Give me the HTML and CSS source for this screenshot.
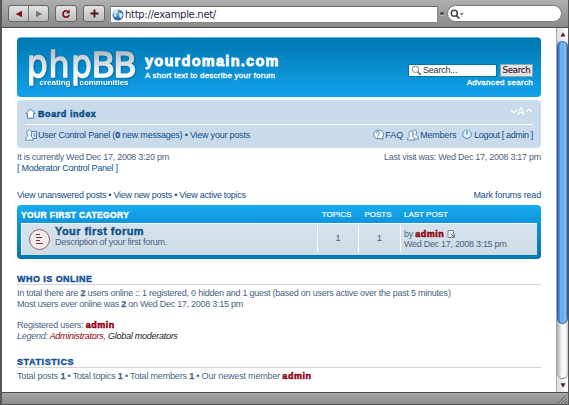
FILE: index.html
```html
<!DOCTYPE html>
<html lang="en">
<head>
<meta charset="utf-8">
<title>yourdomain.com</title>
<link rel="stylesheet" href="styles.css">
</head>
<body>
<div class="window">
  <header class="toolbar">
    <div class="btn pair">
      <span><svg width="8" height="8" viewBox="0 0 8 8"><path d="M7 0.8v6.4L0.8 4z" fill="#8a0c18"/></svg></span>
      <span><svg width="8" height="8" viewBox="0 0 8 8"><path d="M1 0.8v6.4L7.2 4z" fill="#777"/></svg></span>
    </div>
    <div class="btn reload"><svg width="10" height="10" viewBox="0 0 10 10"><path d="M7.7 3A3.2 3.2 0 1 0 8.2 6" fill="none" stroke="#7d1018" stroke-width="1.7"/><path d="M5 4.2L8.7 0.6V4.4z" fill="#7d1018"/></svg></div>
    <div class="btn add"><svg width="9" height="9" viewBox="0 0 9 9"><path d="M4.5 .5v8M.5 4.5h8" stroke="#521018" stroke-width="1.8"/></svg></div>
    <div class="address">
      <svg width="12" height="12" viewBox="0 0 12 12"><defs><radialGradient id="globe" cx=".35" cy=".3"><stop offset="0" stop-color="#a7d2ef"/><stop offset="1" stop-color="#2b6aa9"/></radialGradient></defs><circle cx="6" cy="6" r="5.5" fill="url(#globe)"/><path d="M1.5 3.5Q4 0 6.2 1.4L5.2 3.6 3 4.5 4.5 7 2.8 8.5zM7 4.5l2.8-.8 1 2.8-2.2 3L7.4 8z" fill="#d7edfa"/></svg>
      <span>http://example.net/</span>
    </div>
    <i class="grip"></i>
    <div class="finder"><svg width="15" height="11" viewBox="0 0 15 11"><circle cx="4.3" cy="4.3" r="3" fill="none" stroke="#444" stroke-width="1.5"/><path d="M6.4 6.5L9.2 9.6" stroke="#444" stroke-width="1.7"/><path d="M9.8 4.2h4l-2 2z" fill="#555"/></svg></div>
  </header>

  <div class="body">
    <main class="page">
      <div class="banner">
        <svg class="logo" width="112" height="46" viewBox="0 0 112 46">
          <defs><linearGradient id="metal" x1="0" y1="0" x2="0" y2="1"><stop offset=".2" stop-color="#b9bec3"/><stop offset=".55" stop-color="#e3e7ea"/><stop offset=".8" stop-color="#fff"/></linearGradient></defs>
          <g class="mark" fill="url(#metal)" stroke="url(#metal)">
            <text transform="translate(-.2 32.700) scale(.85 1)" font-size="39">p</text>
            <text transform="translate(21.600 32.700) scale(.93 1)" font-size="36">h</text>
            <text transform="translate(44 32.700) scale(.85 1)" font-size="39">p</text>
            <text transform="translate(64.500 32.700)" font-size="34.500">B</text>
            <text transform="translate(86.300 32.700)" font-size="34.500">B</text>
          </g>
          <g class="motto"><text x="12.500" y="41" textLength="31">creating</text><text x="52.500" y="41" textLength="49">communities</text></g>
        </svg>
        <div class="titles"><h1>yourdomain.com</h1><p>A short text to describe your forum</p></div>
        <div class="search">
          <div class="fields">
            <div class="query"><svg width="11" height="11" viewBox="0 0 11 11"><circle cx="4.5" cy="4.3" r="3.2" fill="#fff" stroke="#888"/><path d="M6.8 6.8L9.8 10" stroke="#666" stroke-width="1.6"/></svg><span>Search...</span></div>
            <div class="go"><span>Search</span></div>
          </div>
          <a class="advanced">Advanced search</a>
        </div>
      </div>

      <nav class="navbar">
        <div class="crumbs">
          <svg width="11" height="11" viewBox="0 0 11 11"><path d="M1 5.4L5.5 .9 10 5.4H8.7v4.8H2.3V5.4z" fill="#fff" stroke="#2c77b3" stroke-width=".9"/></svg>
          <b class="board">Board index</b>
          <svg class="sizer" width="23" height="10" viewBox="0 0 23 10"><path d="M.8 2L4 4.700 7.2 2M16 3.700L19 1l3 2.700" fill="none" stroke="#fff" stroke-width="1.2"/><text x="7.500" y="7">A</text></svg>
        </div>
        <div class="links">
          <svg width="12" height="12" viewBox="0 0 12 12"><path d="M6.5 2.5h5v7h-5z" fill="#e9f4fc" stroke="#347eb8" stroke-width=".9"/><path d="M8.5 5h2M8.5 7h2" stroke="#347eb8"/><path d="M.6 11.2C.6 8.5 2 7.4 2.8 7 1 4.5 2 .8 4.3.8s3.3 3.6 1.6 6.2c1 .4 2.3 1.5 2.3 4.2z" fill="#eff6fb" stroke="#4c7898" stroke-width=".8"/></svg>
          <span class="ucp">User Control Panel (<b>0</b> new messages) • View your posts</span>
          <svg class="faqi" width="12" height="12" viewBox="0 0 12 12"><path d="M8.4 9.5l2.8.9-.9-2A5 4.3 0 1 0 8.4 9.5" fill="#fff" stroke="#4c7ba5" stroke-width=".9"/><path d="M4.2 4.2c0-2 3.2-2 3.2 0 0 1.2-1.6 1.1-1.6 2.5M5.8 7.5v1" fill="none" stroke="#347eb8"/></svg>
          <span class="faq">FAQ</span>
          <svg class="memi" width="12" height="12" viewBox="0 0 12 12"><g fill="#eef6fc" stroke="#4c7ba5" stroke-width=".8"><path d="M5 8C5 6.5 5.8 6 6.4 5.7 5 3.5 6 .8 7.6.8s2.8 2.7 1.2 5c1 .4 2.6 1.3 2.6 4.2H7z"/><path d="M.6 11c0-2.6 1.2-3.5 2-3.8C1 5 2 2 3.9 2s3 3 1.5 5.2c.8.3 2.2 1.2 2.2 3.8z"/></g></svg>
          <span class="members">Members</span>
          <svg class="outi" width="10" height="11" viewBox="0 0 10 11"><path d="M3 1.4a4.3 4.3 0 1 0 4 0" fill="#dfedf8" stroke="#4c88bd"/><path d="M5 .5v5" stroke="#347eb8" stroke-width="1.1"/></svg>
          <span class="logout">Logout [ admin ]</span>
        </div>
      </nav>

      <div class="row status"><span class="now">It is currently Wed Dec 17, 2008 3:20 pm</span><span class="last">Last visit was: Wed Dec 17, 2008 3:17 pm</span></div>
      <div class="row"><span class="mod">[ <a>Moderator Control Panel</a> ]</span></div>
      <div class="row views"><span class="viewlinks">View unanswered posts • View new posts • View active topics</span><span class="mark-read">Mark forums read</span></div>

      <section class="forums">
        <div class="grid head"><b class="cat">YOUR FIRST CATEGORY</b><span class="c">TOPICS</span><span class="c">POSTS</span><span class="lp">LAST POST</span></div>
        <div class="grid forum">
          <div class="topic">
            <svg width="23" height="23" viewBox="0 0 23 23"><circle cx="11.5" cy="11.5" r="10" fill="#f1eeee" stroke="#985b60" stroke-width="1"/><path d="M8 6.500h4M8 9.500h6M8 12.500h4M8 15.500h7" stroke="#8d252c" stroke-width="1.1"/></svg>
            <div><b class="name">Your first forum</b><p class="desc">Description of your first forum.</p></div>
          </div>
          <span class="num">1</span><span class="num">1</span>
          <div class="post"><p>by <b class="admin">admin</b> <svg width="8" height="8" viewBox="0 0 8 8"><path d="M1 .5h5.5V4M4 7.5H1v-7" fill="#fff" stroke="#777" stroke-width=".9"/><path d="M4 4l3 3M7.2 4v3.300h-3" fill="none" stroke="#555" stroke-width=".9"/></svg></p><p class="date">Wed Dec 17, 2008 3:15 pm</p></div>
        </div>
      </section>

      <section class="info online">
        <h3>WHO IS ONLINE</h3>
        <p class="total">In total there are <b>2</b> users online :: 1 registered, 0 hidden and 1 guest (based on users active over the past 5 minutes)</p>
        <p class="most">Most users ever online was <b>2</b> on Wed Dec 17, 2008 3:15 pm</p>
        <p class="registered">Registered users: <b class="admin">admin</b></p>
        <p class="legend">Legend: <a class="adm">Administrators</a>, <a class="glob">Global moderators</a></p>
      </section>
      <section class="info stats">
        <h3>STATISTICS</h3>
        <p class="totals">Total posts <b>1</b> • Total topics <b>1</b> • Total members <b>1</b> • Our newest member <b class="admin">admin</b></p>
      </section>
    </main>
    <aside class="scroll">
      <div class="arrow"><svg width="6" height="5" viewBox="0 0 6 5"><path d="M.5 4.5h5L3 .3z" fill="#4a2328"/></svg></div>
      <div class="track"><div class="thumb"></div></div>
      <div class="arrow"><svg width="6" height="5" viewBox="0 0 6 5"><path d="M.5 .3h5L3 4.7z" fill="#4a2328"/></svg></div>
    </aside>
  </div>
  <footer class="statusbar"><svg width="10" height="9" viewBox="0 0 10 9"><path d="M1 8.500L9 .5M4 8.500L9.500 3.500M7 8.500L9.500 6.500" stroke="#555" stroke-width=".9"/><path d="M2 9L9.500 1.500M5 9L10 4.500" stroke="#ccc" stroke-width=".6"/></svg></footer>
</div>
</body>
</html>
```
FILE: styles.css
```css
* { box-sizing: border-box; }
body { margin: 0; font-family: "Liberation Sans", sans-serif; font-size: 9px; line-height: 11px; color: #4c5f84; overflow: hidden; }
h1, h3, p { margin: 0; }
svg { display: block; flex: none; }
b { color: inherit; -webkit-text-stroke: .25px; }
.window { width: 569px; height: 405px; display: flex; flex-direction: column; background: #fff; border: solid #555; border-width: 0 1px 1px 2px; }

.toolbar { height: 28px; flex: none; display: flex; align-items: flex-start; padding: 5px 5px 0 6px; background: linear-gradient(#afafaf, #999 60%, #8b8b8b); border-bottom: 1px solid #4d4d4d; }
.btn { height: 17px; border: 1px solid #666; border-radius: 3px; background: linear-gradient(#e4e4e4, #bdbdbd); display: flex; align-items: center; justify-content: center; }
.pair { width: 41px; }
.pair span { flex: 1; height: 15px; display: flex; align-items: center; justify-content: center; }
.pair span + span { border-left: 1px solid #777; }
.reload { width: 22px; margin-left: 6px; }
.add { width: 22px; margin-left: 6px; }
.address { width: 328px; height: 17px; margin-left: 5px; margin-top: 1px; background: #fff; border: 1px solid #888; border-top-color: #666; display: flex; align-items: center; padding-left: 1px; font: 10px/15px "DejaVu Sans", sans-serif; color: #282c44; }
.address span { margin-left: 1px; letter-spacing: -.3px; }
.grip { width: 4px; height: 4px; margin: 7px 3px 0 2px; border-radius: 2px; background: #444; border-bottom: 1px solid #ddd; }
.finder { width: 115px; height: 17px; border-radius: 9px; background: #fff; border: 1px solid #777; padding: 3px 0 0 2px; }

.body { flex: 1; min-height: 0; display: flex; }
.page { flex: 1; padding: 9px 15px 0; white-space: nowrap; }

.banner { width: 524px; height: 60px; border-radius: 4px; background: linear-gradient(#0076b1, #12a3eb); border-top: 1px solid #5bb5df; display: flex; color: #fff; }
.logo { margin: 6px 0 0 10px; overflow: visible; filter: drop-shadow(1px 1px 1px #075887aa); }
.mark { font-family: "DejaVu Sans"; stroke-width: 1.4; stroke-linejoin: round; }
.motto { font: bold 8px "Liberation Sans"; fill: #fff; }
.titles { margin: 15px 0 0 6px; width: 240px; }
h1 { font-size: 14.500px; line-height: 16px; -webkit-text-stroke: .8px; letter-spacing: 1.28px; }
.titles p { font-size: 8px; line-height: 13px; -webkit-text-stroke: .3px; letter-spacing: .24px; }
.search { margin: 26px 8px 0 auto; display: flex; flex-direction: column; }
.fields { display: flex; justify-content: space-between; width: 125px; }
.query { width: 89px; height: 13px; background: #fff; border: 1px solid #0075b0; color: #333; display: flex; align-items: center; padding-left: 2px; }
.query span { margin-left: 1px; letter-spacing: -.2px; }
.go { width: 33px; height: 13px; background: #dfe3e5; border: 1px solid #8aa; color: #481c28; text-align: center; font: 8.500px/11px "DejaVu Sans"; }
.go span { letter-spacing: -.2px; -webkit-text-stroke: .2px; }
.advanced { align-self: flex-end; font-size: 8px; line-height: 12px; -webkit-text-stroke: .3px; letter-spacing: .3px; }

.navbar { width: 524px; height: 48px; margin-top: 3px; border-radius: 4px; background: #cadceb; padding: 0 8px; color: #104f88; }
.crumbs { height: 25px; border-bottom: 1px solid #fff; display: flex; padding-top: 8px; }
.board { margin-left: 2px; -webkit-text-stroke: .5px; letter-spacing: .57px; line-height: 12px; }
.sizer { margin-left: auto; overflow: visible; }
.sizer text { font-size: 10px; fill: #fff; }
.links { display: flex; padding-top: 4px; line-height: 13px; letter-spacing: -.22px; }
.ucp { margin-left: 1px; }
.faqi { margin-left: auto; }
.faq { margin-left: 1px; letter-spacing: 0; }
.memi { margin-left: 4px; }
.outi { margin-left: 6px; }
.members { margin-left: 1px; }
.logout { margin-left: 2px; letter-spacing: -.36px; }

.row { width: 524px; display: flex; justify-content: space-between; line-height: 11px; letter-spacing: -.275px; }
.status { padding-top: 4px; }
.mod, .viewlinks, .mark-read { color: #104f88; }
.mark-read { letter-spacing: -.19px; }
.views { padding-top: 16px; }

.forums { width: 524px; height: 54px; margin-top: 4px; border-radius: 4px; background: linear-gradient(#17abf0, #0d91d9 40%, #0075b0); padding: 0 4px; }
.grid { display: grid; grid-template-columns: 295px 41px 42px 1fr; }
.head { color: #fff; height: 18px; line-height: 20px; font-size: 8px; }
.head span { -webkit-text-stroke: .2px; }
.cat { font-size: 8.500px; letter-spacing: .38px; -webkit-text-stroke: .4px; }
.c { text-align: center; }
.lp { padding-left: 5px; }
.forum { height: 32px; background: linear-gradient(#d7e3eb, #cfdde8); border: solid #f5fafd; border-width: 1px 0 0 1px; padding-top: 1px; }
.topic { display: flex; padding-left: 6px; }
.topic svg { margin-top: 3px; }
.topic div { margin-left: 4px; }
.name { display: block; color: #105289; font-size: 11px; line-height: 12px; letter-spacing: .42px; -webkit-text-stroke: .4px; }
.desc { line-height: 10px; letter-spacing: -.25px; }
.num { height: 27px; line-height: 27px; border-left: 1px solid #fff; text-align: center; color: #4c5d77; }
.post { height: 27px; border-left: 1px solid #fff; padding: 5px 0 0 3px; line-height: 9.500px; letter-spacing: -.29px; }
.post svg { display: inline-block; vertical-align: -1px; }
.admin { color: #900010; letter-spacing: .55px; -webkit-text-stroke: .5px; }

.info { width: 524px; letter-spacing: -.245px; }
.info h3 { color: #115098; font-size: 9px; line-height: 10px; border-bottom: 1px solid #d4d4d4; -webkit-text-stroke: .4px; letter-spacing: .45px; }
.online { padding-top: 15px; }
.total { margin-top: 3px; }
.most { letter-spacing: -.27px; }
.registered { margin-top: 10px; }
.legend { font-style: italic; letter-spacing: -.26px; }
.adm { color: #900010; }
.glob { color: #222; }
.stats { padding-top: 15px; }
.stats h3 { letter-spacing: .6px; }
.totals { margin-top: 3px; letter-spacing: -.18px; }

.scroll { width: 12px; flex: none; display: flex; flex-direction: column; border-left: 1px solid #aaa; background: #eee; }
.arrow { height: 13px; display: flex; align-items: center; justify-content: center; background: linear-gradient(90deg, #ddd, #fff); }
.track { flex: 1; background: linear-gradient(90deg, #aaa, #f2f2f2 40%, #fff 70%, #ccc); border-radius: 0 0 6px 6px; border-bottom: 1px solid #888; }
.thumb { height: 283px; border-radius: 6px; border: 1px solid #315fa8; background: linear-gradient(90deg, #2a63b6, #78b7ef 30%, #5ca6e9 55%, #8dccf7 80%, #3d7fc4); }
.statusbar { height: 12px; flex: none; border-top: 1px solid #4d4d4d; background: linear-gradient(#a5a5a5, #8d8d8d); display: flex; justify-content: flex-end; padding: 2px 1px 0 0; }
```
